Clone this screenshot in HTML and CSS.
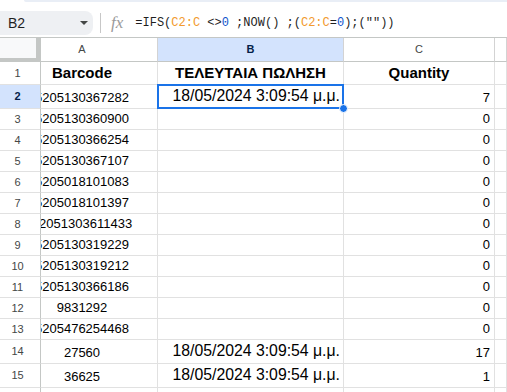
FILE: index.html
```html
<!DOCTYPE html>
<html lang="el">
<head>
    <meta charset="UTF-8">
    <meta name="viewport" content="width=device-width, initial-scale=1">
    <title>Φύλλο - Πωλήσεις</title>
    <link rel="stylesheet" href="styles.css">
</head>
<body>

<div class="toolbar-edge"></div>

<div class="formula-bar">
    <div class="name-box">
        <span>B2</span>
        <span class="caret"></span>
    </div>
    <span class="divider"></span>
    <span class="fx">fx</span>
    <span class="formula">=IFS(<span class="ref">C2:C</span> &lt;&gt;<span class="lit">0</span> ;NOW() ;(<span class="ref">C2:C</span>=<span class="lit">0</span>);(""))</span>
</div>

<div class="sheet">
    <!-- column headers -->
    <div class="cell corner"></div>
    <div class="cell col-head col-a"><span>A</span></div>
    <div class="cell col-head active-head"><span>B</span></div>
    <div class="cell col-head"><span>C</span></div>
    <div class="cell col-head"></div>

    <!-- 1 -->
    <div class="cell row-head">1</div>
    <div class="cell col-a title"><span>Barcode</span></div>
    <div class="cell title"><span>ΤΕΛΕΥΤΑΙΑ ΠΩΛΗΣΗ</span></div>
    <div class="cell title"><span>Quantity</span></div>
    <div class="cell"></div>

    <!-- 2 -->
    <div class="cell row-head active-head">2</div>
    <div class="cell col-a"><span>5205130367282</span></div>
    <div class="cell date selected"><span>18/05/2024 3:09:54 μ.μ.</span></div>
    <div class="cell num"><span>7</span></div>
    <div class="cell"></div>

    <!-- 3 -->
    <div class="cell row-head">3</div>
    <div class="cell col-a"><span>5205130360900</span></div>
    <div class="cell"></div>
    <div class="cell num"><span>0</span></div>
    <div class="cell"></div>

    <!-- 4 -->
    <div class="cell row-head">4</div>
    <div class="cell col-a"><span>5205130366254</span></div>
    <div class="cell"></div>
    <div class="cell num"><span>0</span></div>
    <div class="cell"></div>

    <!-- 5 -->
    <div class="cell row-head">5</div>
    <div class="cell col-a"><span>5205130367107</span></div>
    <div class="cell"></div>
    <div class="cell num"><span>0</span></div>
    <div class="cell"></div>

    <!-- 6 -->
    <div class="cell row-head">6</div>
    <div class="cell col-a"><span>5205018101083</span></div>
    <div class="cell"></div>
    <div class="cell num"><span>0</span></div>
    <div class="cell"></div>

    <!-- 7 -->
    <div class="cell row-head">7</div>
    <div class="cell col-a"><span>5205018101397</span></div>
    <div class="cell"></div>
    <div class="cell num"><span>0</span></div>
    <div class="cell"></div>

    <!-- 8 -->
    <div class="cell row-head">8</div>
    <div class="cell col-a"><span>52051303611433</span></div>
    <div class="cell"></div>
    <div class="cell num"><span>0</span></div>
    <div class="cell"></div>

    <!-- 9 -->
    <div class="cell row-head">9</div>
    <div class="cell col-a"><span>5205130319229</span></div>
    <div class="cell"></div>
    <div class="cell num"><span>0</span></div>
    <div class="cell"></div>

    <!-- 10 -->
    <div class="cell row-head">10</div>
    <div class="cell col-a"><span>5205130319212</span></div>
    <div class="cell"></div>
    <div class="cell num"><span>0</span></div>
    <div class="cell"></div>

    <!-- 11 -->
    <div class="cell row-head">11</div>
    <div class="cell col-a"><span>5205130366186</span></div>
    <div class="cell"></div>
    <div class="cell num"><span>0</span></div>
    <div class="cell"></div>

    <!-- 12 -->
    <div class="cell row-head">12</div>
    <div class="cell col-a"><span>9831292</span></div>
    <div class="cell"></div>
    <div class="cell num"><span>0</span></div>
    <div class="cell"></div>

    <!-- 13 -->
    <div class="cell row-head">13</div>
    <div class="cell col-a"><span>5205476254468</span></div>
    <div class="cell"></div>
    <div class="cell num"><span>0</span></div>
    <div class="cell"></div>

    <!-- 14 -->
    <div class="cell row-head">14</div>
    <div class="cell col-a"><span>27560</span></div>
    <div class="cell date"><span>18/05/2024 3:09:54 μ.μ.</span></div>
    <div class="cell num"><span>17</span></div>
    <div class="cell"></div>

    <!-- 15 -->
    <div class="cell row-head">15</div>
    <div class="cell col-a"><span>36625</span></div>
    <div class="cell date"><span>18/05/2024 3:09:54 μ.μ.</span></div>
    <div class="cell num"><span>1</span></div>
    <div class="cell"></div>

    <!-- 16 -->
    <div class="cell row-head">16</div>
    <div class="cell col-a"></div>
    <div class="cell"></div>
    <div class="cell"></div>
    <div class="cell"></div>
</div>

</body>
</html>
```

FILE: styles.css
```css
body {
    margin: 0;
    width: 507px;
    height: 392px;
    overflow: hidden;
    background: #fff;
    font-family: "Liberation Sans", Arial, sans-serif;
    color: #000;
}
.toolbar-edge {
    height: 2px;
    margin-left: 24px;
    background: #e9eef6;
    border-bottom-left-radius: 6px;
}
.formula-bar {
    display: flex;
    align-items: center;
    height: 24px;
    margin: 9px 0 2px;
}
.name-box {
    box-sizing: border-box;
    width: 93px;
    height: 24px;
    display: flex;
    align-items: center;
    justify-content: space-between;
    padding: 0 5px 0 8px;
    background: #eef0f3;
    border-radius: 0 8px 8px 0;
    font-size: 14px;
    color: #1f1f1f;
}
.caret {
    width: 0;
    height: 0;
    border-left: 4px solid transparent;
    border-right: 4px solid transparent;
    border-top: 4px solid #444746;
}
.divider {
    width: 1px;
    height: 20px;
    margin-left: 7px;
    background: #c7c7c7;
}
.fx {
    margin-left: 10px;
    font-family: "Liberation Serif", serif;
    font-style: italic;
    font-size: 17px;
    color: #9a9a9a;
}
.formula {
    margin-left: 12px;
    font-family: "Liberation Mono", monospace;
    font-size: 12px;
    color: #1f1f1f;
    white-space: pre;
}
.formula .ref {
    color: #f29a2e;
}
.formula .lit {
    color: #1155cc;
}
.sheet {
    display: grid;
    grid-template-columns: 41px 117px 186px 151px 1fr;
    grid-template-rows: 24px 23px 24px repeat(11, 21px) 24px 24px 21px;
    border-top: 1px solid #c4c7c5;
}
.cell {
    box-sizing: border-box;
    display: flex;
    align-items: flex-end;
    padding: 0 4px 3px;
    border-right: 1px solid #e1e1e1;
    border-bottom: 1px solid #e1e1e1;
    font-size: 13px;
    line-height: 15px;
    white-space: nowrap;
    overflow: hidden;
}
.cell span {
    flex-shrink: 0;
}
.corner {
    background: #f8f9fa;
    border-right: 5px solid #c4c7c5;
    border-bottom: 4px solid #c4c7c5;
}
.col-head {
    align-items: center;
    justify-content: center;
    padding: 0;
    border-right-color: #d3d3d3;
    border-bottom-color: #c4c7c5;
    font-size: 11px;
    color: #444746;
}
.row-head {
    align-items: center;
    justify-content: center;
    padding: 0 5px 0 0;
    border-right-color: #c4c7c5;
    font-size: 11px;
    color: #444746;
}
.active-head {
    background: #d3e3fd;
    font-weight: bold;
    color: #041e49;
}
.col-a {
    justify-content: center;
    padding-left: 4px;
    padding-right: 38px;
}
.title {
    justify-content: center;
    font-weight: bold;
    font-size: 15px;
    line-height: 17px;
}
.date {
    justify-content: flex-end;
    padding-right: 3px;
    font-size: 15.8px;
    line-height: 18px;
}
.num {
    justify-content: flex-end;
}
.selected {
    position: relative;
    z-index: 1;
    overflow: visible;
}
.selected::before {
    content: "";
    position: absolute;
    left: -1px;
    top: -1px;
    right: -1px;
    bottom: -1px;
    border: 2px solid #1a73e8;
}
.selected::after {
    content: "";
    position: absolute;
    right: -5px;
    bottom: -5px;
    width: 7px;
    height: 7px;
    border: 1px solid #fff;
    border-radius: 50%;
    background: #1a73e8;
}
```
